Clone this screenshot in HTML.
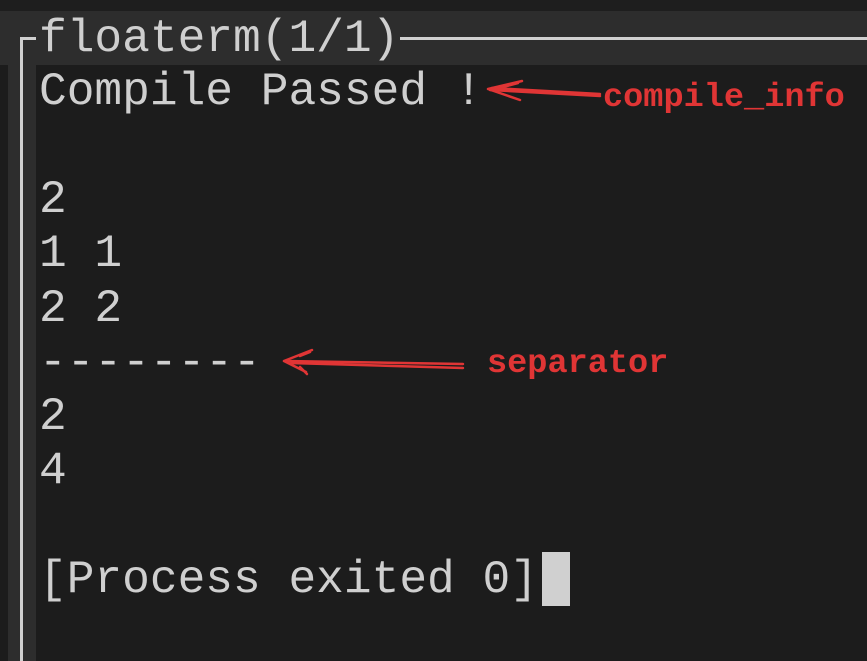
<!DOCTYPE html>
<html><head><meta charset="utf-8"><style>
html,body{margin:0;padding:0;width:867px;height:661px;overflow:hidden;background:#1c1c1c;}
.t{position:absolute;font-family:"Liberation Mono",monospace;font-size:46.2px;color:#cfcfcf;white-space:pre;line-height:54px;height:54px;}
.r{position:absolute;font-family:"Liberation Mono",monospace;font-weight:bold;font-size:33.6px;color:#e03535;white-space:pre;line-height:40px;}
</style></head><body>
<div style="position:absolute;left:0;top:0;width:867px;height:11px;background:#1e1e1e"></div>
<div style="position:absolute;left:0;top:11px;width:867px;height:54px;background:#2d2d2d"></div>
<div style="position:absolute;left:8px;top:65px;width:28px;height:596px;background:#2d2d2d"></div>
<div style="position:absolute;left:20px;top:37px;width:3px;height:624px;background:#d0d0d0"></div>
<div style="position:absolute;left:20px;top:37px;width:16px;height:3px;background:#d0d0d0"></div>
<div style="position:absolute;left:400px;top:37px;width:467px;height:3px;background:#d0d0d0"></div>
<div class="t" style="left:39px;top:12px">floaterm(1/1)</div>
<div class="t" style="left:39px;top:65px">Compile Passed !</div>
<div class="t" style="left:39px;top:173px">2</div>
<div class="t" style="left:39px;top:227px">1 1</div>
<div class="t" style="left:39px;top:282px">2 2</div>
<div class="t" style="left:39px;top:336px">--------</div>
<div class="t" style="left:39px;top:390px">2</div>
<div class="t" style="left:39px;top:444px">4</div>
<div class="t" style="left:39px;top:553px">[Process exited 0]</div>
<div style="position:absolute;left:542px;top:552px;width:28px;height:54px;background:#d0d0d0"></div>
<div class="r" style="left:603px;top:78px">compile_info</div>
<div class="r" style="left:487px;top:344px">separator</div>
<svg width="867" height="661" style="position:absolute;left:0;top:0" fill="none" stroke="#e03535" stroke-width="2.5" stroke-linecap="round">
<path d="M600 96 L490 90 M600 94 L492 88"/>
<path d="M488 89 L522 81 M488 89 L520 100 M492 90 L518 83"/>
<path d="M463 364 L285 361 M463 368 L290 363"/>
<path d="M284 361 L312 350 M284 361 L306 372 M300 356 L310 352 M300 367 L307 374"/>
</svg>
</body></html>
